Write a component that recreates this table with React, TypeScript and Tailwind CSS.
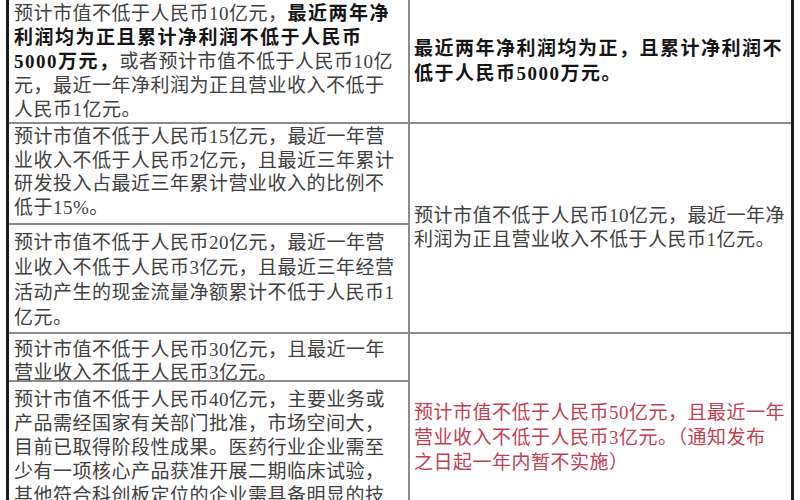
type Seg = { t: string; b?: boolean };
type Line = Seg[];

const n = (t: string): Seg => ({ t });
const b = (t: string): Seg => ({ t, b: true });

const FONT = "[font-family:'Liberation_Serif','Noto_Sans_CJK_SC',serif]";

function Lines({ lines, className = "" }: { lines: Line[]; className?: string }) {
  return (
    <div className={className}>
      {lines.map((line, i) => (
        <div key={i} className="whitespace-nowrap">
          {line.map((seg, j) =>
            seg.b ? (
              <span key={j} className="font-bold tracking-[1.5px] text-[#151515]">
                {seg.t}
              </span>
            ) : (
              <span key={j}>{seg.t}</span>
            ),
          )}
        </div>
      ))}
    </div>
  );
}

const plain = (...rows: string[]): Line[] => rows.map((r) => [n(r)]);

const row1: Line[] = [
  [n("预计市值不低于人民币10亿元，"), b("最近两年净")],
  [b("利润均为正且累计净利润不低于人民币")],
  [b("5000万元，"), n("或者预计市值不低于人民币10亿")],
  [n("元，最近一年净利润为正且营业收入不低于")],
  [n("人民币1亿元。")],
];

const row2 = plain(
  "预计市值不低于人民币15亿元，最近一年营",
  "业收入不低于人民币2亿元，且最近三年累计",
  "研发投入占最近三年累计营业收入的比例不",
  "低于15%。",
);

const row3 = plain(
  "预计市值不低于人民币20亿元，最近一年营",
  "业收入不低于人民币3亿元，且最近三年经营",
  "活动产生的现金流量净额累计不低于人民币1",
  "亿元。",
);

const row4 = plain("预计市值不低于人民币30亿元，且最近一年", "营业收入不低于人民币3亿元。");

const row5 = plain(
  "预计市值不低于人民币40亿元，主要业务或",
  "产品需经国家有关部门批准，市场空间大，",
  "目前已取得阶段性成果。医药行业企业需至",
  "少有一项核心产品获准开展二期临床试验，",
  "其他符合科创板定位的企业需具备明显的技",
  "术优势并满足相应条件。",
);

const rightA: Line[] = [[b("最近两年净利润均为正，且累计净利润不")], [b("低于人民币5000万元。")]];

const rightB = plain("预计市值不低于人民币10亿元，最近一年净", "利润为正且营业收入不低于人民币1亿元。");

const rightC = plain(
  "预计市值不低于人民币50亿元，且最近一年",
  "营业收入不低于人民币3亿元。（通知发布",
  "之日起一年内暂不实施）",
);

export default function App() {
  return (
    <div className={`h-[500px] w-[800px] overflow-hidden bg-white ${FONT} text-[19px] tracking-[0.5px] text-[#404040]`}>
      <div className="ml-[6px] w-[788px] border-x-[3px] border-[#1c1c1c] bg-[#8c8c8c]">
        <div className="grid grid-cols-[399px_381px] grid-rows-[122px_99px_107px_46px_158px] gap-[2px]">
          <div className="col-start-1 row-start-1 bg-white pl-[5px] pt-[2px] leading-6">
            <Lines lines={row1} />
          </div>
          <div className="col-start-2 row-start-1 flex items-center bg-white pl-[4px] leading-[25px]">
            <Lines lines={rightA} />
          </div>

          <div className="col-start-1 row-start-2 bg-white pl-[5px] pt-[1px] leading-[23.7px]">
            <Lines lines={row2} />
          </div>
          <div className="col-start-1 row-start-3 bg-white pl-[5px] pt-[5px] leading-[25px]">
            <Lines lines={row3} />
          </div>
          <div className="col-start-2 row-start-2 row-span-2 flex items-center bg-white pl-[4px] leading-6">
            <Lines lines={rightB} />
          </div>

          <div className="col-start-1 row-start-4 bg-white pl-[5px] pt-[4px] leading-[23px]">
            <Lines lines={row4} />
          </div>
          <div className="col-start-1 row-start-5 bg-white pl-[5px] pt-[6px] leading-6">
            <Lines lines={row5} />
          </div>
          <div className="col-start-2 row-start-4 row-span-2 flex items-center bg-white pl-[4px] leading-[25px] text-[#c2404f]">
            <Lines lines={rightC} />
          </div>
        </div>
      </div>
    </div>
  );
}
